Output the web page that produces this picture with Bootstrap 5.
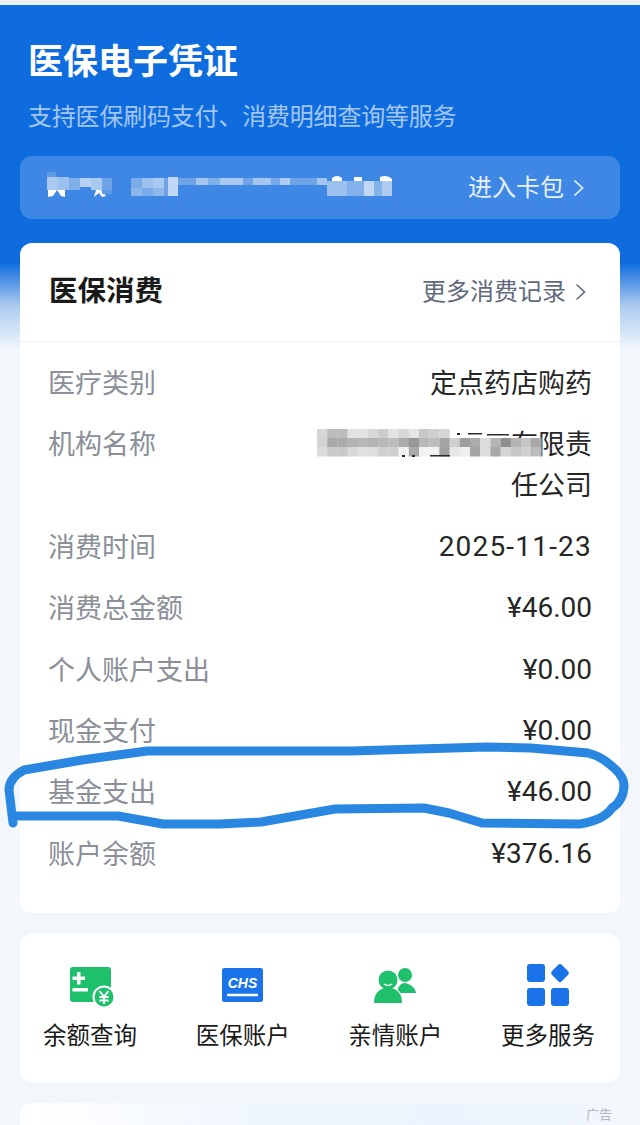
<!DOCTYPE html>
<html lang="zh-CN">

<head>
    <meta charset="UTF-8" />
    <meta name="viewport" content="width=device-width, initial-scale=1.0" />
    <title>医保电子凭证</title>
    <link href="https://cdn.jsdelivr.net/npm/bootstrap@5.3.0/dist/css/bootstrap.min.css" rel="stylesheet">

    <style>
        html,
        body {
            height: 1125px;
            overflow: hidden;
        }

        body {
            font-family: Roboto, "Noto Sans CJK SC", sans-serif;
            background: #f3f7fc;
        }

        .page-wrap {
            position: relative;
            height: 1125px;
            overflow: hidden;
            border-top: 5px solid #eef1f4;
            background: linear-gradient(#0f6cdf 0, #0f6cdf 258px, #a9c9f0 300px, #f3f7fc 345px);
        }

        .hero-title {
            font-size: 35px;
            line-height: 44px;
            font-weight: 700;
            color: #fff;
            margin: 36px 0 0 28px;
        }

        .hero-sub {
            font-size: 24px;
            line-height: 34px;
            color: #a3c6f3;
            margin: 15px 0 0 28px;
            letter-spacing: -.2px;
        }

        .wallet-bar {
            height: 63px;
            margin: 22px 20px 0;
            padding: 0 36px 0 0;
            border-radius: 12px;
            background: #3e87e4;
            color: #e8f1fc;
            font-size: 24px;
        }

        .panel {
            background: #fff;
            border-radius: 12px;
            margin: 0 20px;
        }

        .panel-main {
            margin-top: 24px;
        }

        .panel-top {
            height: 99px;
            padding: 0 34px 0 29px;
            border-bottom: 1px solid #eef0f3;
        }

        .panel-title {
            font-size: 28.5px;
            font-weight: 700;
            color: #1a1a1a;
        }

        .panel-more {
            font-size: 24px;
            color: #5f6b7c;
        }

        .chev {
            width: 11px;
            height: 18px;
            margin-left: 9px;
        }

        .detail-list {
            padding: 22px 28px 0 28px;
            height: 571px;
        }

        .detail-row {
            font-size: 27px;
            line-height: 41px;
            margin-bottom: 20.4px;
        }

        .detail-label {
            color: #8a8f98;
        }

        .detail-value {
            color: #262626;
            text-align: right;
        }

        .num-value {
            font-size: 28px;
            margin-top: -2px;
        }

        .date-value {
            letter-spacing: 1.2px;
        }

        .svc-panel {
            height: 148px;
            margin-top: 21px;
            padding: 27px 24px 0 22px;
        }

        .svc-item {
            width: 96px;
            font-size: 23.5px;
            line-height: 34px;
            color: #1a1a1a;
            text-align: center;
        }

        .svc-icon {
            width: 48px;
            height: 48px;
            display: block;
            margin: 0 auto 10px;
        }

        .ad-panel {
            height: 60px;
            margin-top: 21px;
            background: linear-gradient(90deg, #fff 0, #f0f6fe 40%, #ebf3fe 70%, #f2f7fe 100%);
        }

        .ad-tag {
            position: absolute;
            right: 28px;
            top: 1102px;
            font-size: 13px;
            line-height: 16px;
            color: #b4b8bd;
        }

        .over-layer {
            position: absolute;
            left: 0;
            top: -5px;
            width: 640px;
            height: 1125px;
            pointer-events: none;
        }
    </style>
</head>

<body>
    <div class="page-wrap">
        <!-- Header -->
        <div class="hero-title">医保电子凭证</div>
        <div class="hero-sub">支持医保刷码支付、消费明细查询等服务</div>

        <div class="wallet-bar d-flex align-items-center justify-content-end">
            <span>进入卡包</span>
            <svg class="chev" viewBox="0 0 11 18" fill="none" stroke="#e8f1fc" stroke-width="1.7"><path d="M1.5 1.5 9.5 9l-8 7.5" /></svg>
        </div>

        <!-- Consumption card -->
        <div class="panel panel-main">
            <div class="panel-top d-flex align-items-center justify-content-between">
                <div class="panel-title">医保消费</div>
                <div class="panel-more d-flex align-items-center">更多消费记录
                    <svg class="chev" viewBox="0 0 11 18" fill="none" stroke="#5f6b7c" stroke-width="1.6"><path d="M1.5 1.5 9.5 9l-8 7.5" /></svg>
                </div>
            </div>
            <div class="detail-list">
                <div class="detail-row d-flex justify-content-between"><span class="detail-label">医疗类别</span><span class="detail-value">定点药店购药</span></div>
                <div class="detail-row d-flex justify-content-between"><span class="detail-label">机构名称</span><span class="detail-value">有限责<br>任公司</span></div>
                <div class="detail-row d-flex justify-content-between"><span class="detail-label">消费时间</span><span class="detail-value num-value date-value">2025-11-23</span></div>
                <div class="detail-row d-flex justify-content-between"><span class="detail-label">消费总金额</span><span class="detail-value num-value">¥46.00</span></div>
                <div class="detail-row d-flex justify-content-between"><span class="detail-label">个人账户支出</span><span class="detail-value num-value">¥0.00</span></div>
                <div class="detail-row d-flex justify-content-between"><span class="detail-label">现金支付</span><span class="detail-value num-value">¥0.00</span></div>
                <div class="detail-row d-flex justify-content-between"><span class="detail-label">基金支出</span><span class="detail-value num-value">¥46.00</span></div>
                <div class="detail-row d-flex justify-content-between"><span class="detail-label">账户余额</span><span class="detail-value num-value">¥376.16</span></div>
            </div>
        </div>

        <!-- Services -->
        <div class="panel svc-panel d-flex justify-content-between">
            <div class="svc-item">
                <svg class="svc-icon" viewBox="0 0 48 48">
                    <rect x="4" y="6" width="41" height="35" rx="3" fill="#1fc06b" />
                    <path d="M11 11h3.500v4.500H19V19h-4.500v4.500H11V19H6.500v-3.500H11zM6.500 27H22v3.500H6.500z" fill="#fff" />
                    <circle cx="38" cy="36" r="11.500" fill="#fff" />
                    <circle cx="38" cy="36" r="9.500" fill="#1fc06b" />
                    <path d="m33.500 30 4.500 5.500 4.500-5.500M33.500 36h9M33.500 39.500h9M38 35.500V43" fill="none" stroke="#fff" stroke-width="1.900" />
                </svg>
                余额查询
            </div>
            <div class="svc-item">
                <svg class="svc-icon" viewBox="0 0 48 48">
                    <rect x="3" y="7" width="41" height="34" rx="2.500" fill="#1a73e8" />
                    <text x="23.500" y="27" text-anchor="middle" font-family="'Liberation Sans', sans-serif" font-size="14" font-weight="700" font-style="italic" fill="#fff">CHS</text>
                    <path d="M8 34h31" stroke="#fff" stroke-width="2.500" />
                </svg>
                医保账户
            </div>
            <div class="svc-item">
                <svg class="svc-icon" viewBox="0 0 48 48">
                    <circle cx="34" cy="14" r="7" fill="#1fc06b" />
                    <path d="M26 32c1-7 4-10 8-10 5 1 10 4 11 10z" fill="#1fc06b" />
                    <g fill="#fff" stroke="#fff" stroke-width="2.500">
                        <circle cx="17" cy="19" r="9.500" />
                        <path d="M3 42c0-9 4-14 14-16 10 2 14 7 14 16z" />
                    </g>
                    <circle cx="17" cy="19" r="9.500" fill="#1fc06b" />
                    <path d="M3 42c0-9 4-14 14-16 10 2 14 7 14 16z" fill="#1fc06b" />
                    <path d="M13 23q4 3 8 0" fill="none" stroke="#fff" stroke-width="1.500" />
                </svg>
                亲情账户
            </div>
            <div class="svc-item">
                <svg class="svc-icon" viewBox="0 0 48 48">
                    <rect x="3" y="3" width="18" height="18" rx="3" fill="#1a73e8" />
                    <rect x="3" y="27" width="18" height="18" rx="3" fill="#1a73e8" />
                    <rect x="27" y="27" width="18" height="18" rx="3" fill="#1a73e8" />
                    <rect x="29" y="5" width="14" height="14" rx="2.500" transform="rotate(45 36 12)" fill="#1a73e8" />
                </svg>
                更多服务
            </div>
        </div>

        <div class="panel ad-panel"></div>
        <div class="ad-tag">广告</div>

        <!-- Pixelated redactions and the hand-drawn marker ring sit above the page -->
        <svg class="over-layer" viewBox="0 0 640 1125">
            <g fill="#fff">
                <path d="M48 190h9l-4 6-5 1zM57 190h8v7l-4-1zM96 190h5l5 6-4 1-3-4-5 4z" />
                <path d="M332 178q5-4 10 0v3h-10zM354 177h8v4h-8zM380 177q7-3 12 2v2h-12z" />
            </g>
            <g id="mosaicBar"></g>
            <g id="mosaicOrg"></g>
            <g fill="#2b2b2b">
                <path d="M457 433h3v2h-3zM468 433h14v1.500h-14zM487 434h22v1.500h-22zM430 455h20v1.500h-20zM402 455h3v2h-3zM412 455h3v2h-3z" />
            </g>
            <path d="M13 823 9 790Q9 778 24 770L82 760 147 751H351L486 747 531 748 588 753Q600 756 608 763 624 775 624 785 624 800 612 808 604 820 580 824L482 823 449 813 424 808 335 809 261 822 220 824H163L118 816H16" fill="none" stroke="#2a87e1" stroke-width="9" stroke-linecap="round" stroke-linejoin="round" />
        </svg>
    </div>

    <script>
        // mosaic cells: x, y, w, h, colour
        const barCells = [
            [47, 177, 11, 13, "#a9c9f1"], [58, 177, 11, 13, "#9cc1ee"], [69, 178, 11, 12, "#7fafe9"], [80, 178, 11, 9, "#b5d0f3"],
            [91, 178, 11, 12, "#a9c9f1"], [102, 178, 10, 12, "#6ea4e6"], [47, 172, 9, 5, "#5f9be5"], [102, 190, 10, 4, "#5f9be5"],
            [131, 178, 11, 10, "#7aace9"], [142, 178, 11, 10, "#9dc1ee"], [153, 178, 11, 10, "#a9c9f1"], [131, 188, 11, 8, "#8cb7eb"],
            [142, 188, 11, 8, "#7aace9"], [153, 188, 11, 8, "#90baec"], [164, 178, 7, 18, "#6ea4e6"], [168, 177, 10, 19, "#c0d7f5"],
            [178, 178, 18, 7, "#6ea4e6"], [196, 178, 12, 7, "#a3c5f0"], [208, 178, 12, 7, "#7fafe9"], [220, 178, 23, 7, "#a9c9f1"],
            [243, 178, 10, 7, "#6ea4e6"], [253, 178, 18, 7, "#a3c5f0"], [271, 178, 9, 7, "#74a8e8"], [280, 178, 10, 7, "#aecbf2"],
            [290, 178, 27, 7, "#6ea4e6"], [317, 178, 10, 7, "#a3c5f0"], [327, 181, 20, 15, "#9cc1ee"], [347, 181, 17, 15, "#83b2ea"],
            [364, 181, 10, 15, "#c0d7f5"], [374, 181, 8, 15, "#83b2ea"], [382, 181, 10, 15, "#aecbf2"]
        ];
        const topShades = ["#d6d6d6", "#bcbcbc", "#bcbcbc", "#e2e2e2", "#e2e2e2", "#d8d8d8", "#cdcdcd", "#e4e4e4", "#d8d8d8", "#e6e6e6", "#c8c8c8", "#cfcfcf", "#d6d6d6"];
        const midShades = ["#d4d4d4", "#a8a8a8", "#ababab", "#b4b4b4", "#b8b8b8", "#b4b4b4", "#b8b8b8", "#bdbdbd", "#ababab", "#979797", "#b8b8b8", "#bdbdbd", "#a4a4a4", "#cfcfcf", "#9e9e9e", "#ababab", "#dcdcdc", "#b4b4b4", "#8f8f8f", "#b4b4b4", "#c4c4c4", "#a8a8a8"];
        const lowShades = ["#dcdcdc", "#c9c9c9", "#c9c9c9", "#d8d8d8", "#e2e2e2", "#dedede", "#cfcfcf", "#cfcfcf", "#f2f2f2", "#a8a8a8", "#f2f2f2", "#f2f2f2", "#9e9e9e", "#e6e6e6", "#eeeeee", "#a4a4a4", "#dcdcdc", "#a8a8a8", "#d4d4d4", "#c8c8c8", "#d0d0d0", "#bcbcbc"];
        const svgNs = "http://www.w3.org/2000/svg";

        function addCell(parent, cell) {
            const r = document.createElementNS(svgNs, "rect");
            r.setAttribute("x", cell[0]);
            r.setAttribute("y", cell[1]);
            r.setAttribute("width", cell[2]);
            r.setAttribute("height", cell[3]);
            r.setAttribute("fill", cell[4]);
            parent.appendChild(r);
        }

        const barGroup = document.getElementById("mosaicBar");
        barCells.forEach(c => addCell(barGroup, c));

        const orgGroup = document.getElementById("mosaicOrg");
        midShades.forEach((col, i) => {
            const x = 317 + i * 10.2;
            if (i < topShades.length) addCell(orgGroup, [x, 429, 10.4, 9, topShades[i]]);
            addCell(orgGroup, [x, 438, 10.4, 9, col]);
            addCell(orgGroup, [x, 447, 10.4, 9.5, lowShades[i]]);
        });
    </script>
</body>

</html>
